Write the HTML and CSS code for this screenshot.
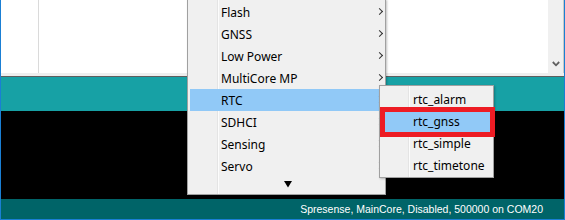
FILE: index.html
```html
<!DOCTYPE html>
<html>
<head>
<meta charset="utf-8">
<link rel="stylesheet" href="styles.css">
</head>
<body>
<div class="window">
  <div class="editor">
    <div class="gutter"></div>
    <div class="code"></div>
    <div class="vscroll">
      <svg class="vchev" width="8" height="6" viewBox="0 0 8 6"><polyline points="0.8,1 4,4.3 7.2,1" fill="none" stroke="#606060" stroke-width="1.8"/></svg>
    </div>
  </div>
  <div class="hstrip"></div>
  <div class="toolbar"></div>
  <div class="console"></div>
  <div class="status">Spresense, MainCore, Disabled, 500000 on COM20</div>
</div>

<div class="menu main">
  <div class="item"><span class="label">Flash</span><span class="chev"></span></div>
  <div class="item"><span class="label">GNSS</span><span class="chev"></span></div>
  <div class="item"><span class="label">Low Power</span><span class="chev"></span></div>
  <div class="item"><span class="label">MultiCore MP</span><span class="chev"></span></div>
  <div class="item active"><span class="label">RTC</span><span class="chev"></span></div>
  <div class="item"><span class="label">SDHCI</span><span class="chev"></span></div>
  <div class="item"><span class="label">Sensing</span><span class="chev"></span></div>
  <div class="item"><span class="label">Servo</span><span class="chev"></span></div>
  <div class="more"><svg width="8" height="7" viewBox="0 0 8 7"><polygon points="0,0 8,0 4,6.5" fill="#000"/></svg></div>
</div>

<div class="menu sub">
  <div class="item"><span class="label">rtc_alarm</span></div>
  <div class="item active"><span class="label">rtc_gnss</span></div>
  <div class="item"><span class="label">rtc_simple</span></div>
  <div class="item"><span class="label">rtc_timetone</span></div>
</div>

<div class="redbox"></div>
</body>
</html>
```

FILE: styles.css
```css
html, body {
  margin: 0;
  padding: 0;
  background: #ffffff;
  overflow: hidden;
}

.window {
  width: 563px;
  height: 219px;
  border-left: 1px solid #1a7fd4;
  border-right: 1px solid #1a7fd4;
  border-bottom: 1px solid #1a7fd4;
  display: flex;
  flex-direction: column;
}

.editor {
  height: 73px;
  display: flex;
  background: #ffffff;
}

.gutter {
  width: 37px;
  border-right: 1px solid #dadada;
  background: #ffffff;
}

.code {
  flex: 1;
  background: #ffffff;
}

.vscroll {
  width: 15px;
  background: #f0f0f0;
  border-right: 1px solid #c8c8c8;
  display: flex;
  flex-direction: column;
  justify-content: flex-end;
  align-items: center;
}

.vchev {
  display: block;
  margin-bottom: 6px;
}

.hstrip {
  height: 3px;
  background: #eeeeee;
  border-bottom: 1px solid #5e5e5e;
}

.toolbar {
  height: 34px;
  background: #17a1a5;
}

.console {
  height: 88px;
  background: #000000;
}

.status {
  height: 20px;
  background: #006468;
  color: #ffffff;
  font-family: "Liberation Sans", Arial, sans-serif;
  font-size: 10.5px;
  letter-spacing: 0;
  line-height: 21px;
  text-align: right;
  padding-right: 21px;
}

.menu {
  position: absolute;
  background: #f0f0f0;
  border: 1px solid #a0a0a0;
  box-shadow: 1px 1px 2px rgba(0, 0, 0, 0.25);
  font-family: "Noto Sans", sans-serif;
  font-size: 12px;
  color: #000000;
  box-sizing: border-box;
}

.menu.main {
  left: 187px;
  top: -1px;
  width: 199px;
  height: 196px;
  padding: 1px 2px 0 2px;
  background: linear-gradient(to right, #f0f0f0 0, #f0f0f0 27px, #e4e4e4 27px, #e4e4e4 28px, #fcfcfc 28px, #fcfcfc 29px, #f0f0f0 29px);
  background-origin: content-box;
  background-color: #f0f0f0;
}

.menu .item {
  height: 22px;
  display: flex;
  align-items: center;
  position: relative;
}

.menu.main .label {
  padding-left: 31px;
}

.menu .item.active {
  background: #91c9f7;
}

.chev {
  position: absolute;
  left: 187px;
  top: 8px;
  width: 4px;
  height: 4px;
  border-right: 1.2px solid #303030;
  border-top: 1.2px solid #303030;
  transform: rotate(45deg);
  transform-origin: center;
}

.more {
  height: 18px;
  display: flex;
  justify-content: center;
  padding-left: 2px;
  align-items: flex-start;
  padding-top: 4px;
  box-sizing: border-box;
}

.more svg {
  display: block;
}

.menu.sub {
  left: 379px;
  top: 85px;
  width: 115px;
  height: 93px;
  padding: 2px 2px 0 2px;
  background: linear-gradient(to right, #f0f0f0 0, #f0f0f0 26px, #e4e4e4 26px, #e4e4e4 27px, #fcfcfc 27px, #fcfcfc 28px, #f0f0f0 28px);
  background-origin: content-box;
  background-color: #f0f0f0;
}

.menu.sub .label {
  padding-left: 31px;
}

.redbox {
  position: absolute;
  left: 380px;
  top: 107px;
  width: 105px;
  height: 20px;
  border: 5px solid #ed1c24;
}
```
